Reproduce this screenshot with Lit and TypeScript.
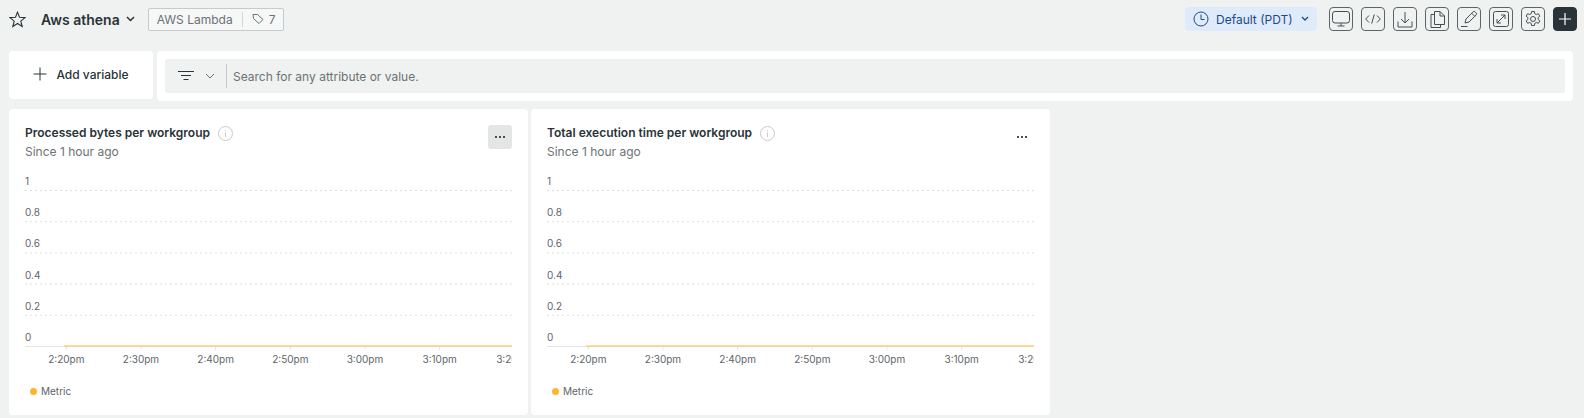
import { LitElement, css, html, svg } from 'lit';
import { customElement, property } from 'lit/decorators.js';

const Y_LABELS = ['1', '0.8', '0.6', '0.4', '0.2', '0'];
const X_LABELS = ['2:20pm', '2:30pm', '2:40pm', '2:50pm', '3:00pm', '3:10pm', '3:20pm'];

@customElement('chart-card')
export class ChartCard extends LitElement {
  @property({ type: String }) heading = '';
  @property({ type: Boolean }) active = false;

  static styles = css`
    :host {
      display: block;
      width: 519px;
      height: 306px;
      background: #fff;
      border-radius: 4px;
      padding: 16px 16px 0 16px;
      box-sizing: border-box;
    }
    .head {
      display: flex;
      justify-content: space-between;
      align-items: flex-start;
      height: 48px;
    }
    .title {
      display: flex;
      align-items: center;
      gap: 8px;
      font-size: 12px;
      font-weight: 600;
      line-height: 16px;
      color: #293338;
    }
    .sub {
      font-size: 12px;
      line-height: 16px;
      margin-top: 3px;
      color: #6b7275;
    }
    .more {
      width: 24px;
      height: 24px;
      border-radius: 3px;
      display: flex;
      align-items: center;
      justify-content: center;
      gap: 2px;
    }
    .more.active {
      background: #e4e6e6;
    }
    .more i {
      width: 2px;
      height: 2px;
      background: #464e52;
    }
    svg.chart {
      display: block;
      overflow: hidden;
    }
    svg.chart text {
      font-size: 10px;
      fill: #5d6568;
    }
    .legend {
      display: flex;
      align-items: center;
      gap: 4px;
      margin: 15px 0 0 5px;
      font-size: 10px;
      line-height: 14px;
      color: #5d6568;
    }
    .dot {
      width: 7px;
      height: 7px;
      border-radius: 50%;
      background: #fdb52c;
    }
  `;

  render() {
    return html`
      <div class="head">
        <div>
          <div class="title">
            ${this.heading}
            <svg width="15" height="15" viewBox="0 0 15 15" fill="none" stroke="#c6caca">
              <circle cx="7.5" cy="7.5" r="7"></circle>
              <path d="M7.5 6.5v4.5M7.5 4v1"></path>
            </svg>
          </div>
          <div class="sub">Since 1 hour ago</div>
        </div>
        <div class="more ${this.active ? 'active' : ''}"><i></i><i></i><i></i></div>
      </div>
      <svg class="chart" width="487" height="196" viewBox="0 0 487 196">
        ${Y_LABELS.map((label, i) => {
          const y = 17 + i * 31.2;
          return svg`
            <text x="0" y=${y - 5}>${label}</text>
            ${i < 5
              ? svg`<line x1="0" x2="487" y1=${y + 0.5} y2=${y + 0.5} stroke="#dcdfdf" stroke-dasharray="2 3"></line>`
              : svg`<line x1="0" x2="487" y1=${y + 0.5} y2=${y + 0.5} stroke="#e3e5e5"></line>`}
          `;
        })}
        <line x1="39" x2="487" y1="173" y2="173" stroke="#f6d27c" stroke-width="1.6"></line>
        ${X_LABELS.map((label, i) => {
          const x = 41.3 + i * 74.67;
          return svg`
            <line x1=${x} x2=${x} y1="174" y2="177" stroke="#e3e5e5"></line>
            <text x=${x} y="190" text-anchor="middle">${label}</text>
          `;
        })}
      </svg>
      <div class="legend"><span class="dot"></span>Metric</div>
    `;
  }
}

@customElement('app-root')
export class AppRoot extends LitElement {
  static styles = css`
    :host {
      display: block;
      width: 1584px;
      height: 418px;
      overflow: hidden;
      background: #f0f2f1;
      font-family: Inter, 'Liberation Sans', sans-serif;
      color: #293338;
    }
    .top {
      display: flex;
      align-items: center;
      height: 51px;
      padding: 0 7px 13px 9px;
      box-sizing: border-box;
    }
    .star {
      margin-right: 15px;
    }
    .name {
      font-size: 14px;
      font-weight: 600;
      margin-right: 6px;
    }
    .caret {
      margin-right: 13px;
    }
    .tag {
      display: flex;
      align-items: center;
      height: 23px;
      box-sizing: border-box;
      border: 1px solid #c6caca;
      border-radius: 2px;
      padding: 0 8px;
      font-size: 12px;
      color: #6b7275;
      background: #f6f7f7;
    }
    .tag .sep {
      width: 1px;
      height: 15px;
      background: #d3d6d6;
      margin: 0 9px;
    }
    .tag svg {
      margin-right: 5px;
    }
    .spacer {
      flex: 1;
    }
    .time {
      display: flex;
      align-items: center;
      height: 24px;
      width: 132px;
      box-sizing: border-box;
      padding: 0 8px;
      background: #dfeafb;
      border-radius: 4px;
      font-size: 12px;
      color: #1d4a87;
      margin-right: 12px;
    }
    .time svg:first-child {
      margin-right: 7px;
    }
    .time svg:last-child {
      margin-left: 8px;
    }
    .icons {
      display: flex;
      gap: 8px;
    }
    .btn {
      width: 24px;
      height: 24px;
      box-sizing: border-box;
      border: 1px solid #5d6568;
      border-radius: 4px;
      display: flex;
      align-items: center;
      justify-content: center;
    }
    .btn.dark {
      background: #293338;
      border-color: #293338;
    }
    .filters {
      display: flex;
      align-items: flex-start;
      gap: 4px;
      padding: 0 11px 0 9px;
    }
    .add {
      width: 144px;
      height: 48px;
      padding-bottom: 2px;
      box-sizing: border-box;
      flex: none;
      background: #fff;
      border-radius: 4px;
      display: flex;
      align-items: center;
      justify-content: center;
      gap: 9px;
      font-size: 12px;
      font-weight: 500;
    }
    .bar {
      flex: 1;
      height: 50px;
      background: #fff;
      border-radius: 4px;
      padding: 8px;
      box-sizing: border-box;
    }
    .search {
      height: 34px;
      background: #f0f2f1;
      border-radius: 2px;
      display: flex;
      align-items: center;
      font-size: 12px;
      color: #6b7275;
    }
    .search .lines {
      margin-left: 13px;
      margin-right: 11px;
    }
    .search .sep {
      width: 1px;
      height: 24px;
      background: #c6caca;
      margin: 0 6px 0 11px;
    }
    .cards {
      display: flex;
      gap: 3px;
      padding: 8px 0 0 9px;
    }
  `;

  render() {
    return html`
      <div class="top">
        <svg class="star" width="17" height="17" viewBox="0 0 17 17" fill="none" stroke="#293338" stroke-width="1.1">
          <path d="M8.5 1.2l2 5 5.6.4-4.3 3.5 1.4 5.4-4.7-3-4.7 3 1.4-5.4-4.3-3.5 5.6-.4z"></path>
        </svg>
        <span class="name">Aws athena</span>
        <svg class="caret" width="9" height="6" viewBox="0 0 9 6" fill="none" stroke="#293338" stroke-width="1.5">
          <path d="M1 1l3.5 3.5L8 1"></path>
        </svg>
        <div class="tag">
          AWS Lambda<span class="sep"></span>
          <svg width="12" height="12" viewBox="0 0 12 12" fill="none" stroke="#6b7275">
            <path d="M1 1.5h4.5L11 6.5 7 10.5 1.5 5.5z"></path>
          </svg>
          7
        </div>
        <span class="spacer"></span>
        <div class="time">
          <svg width="16" height="16" viewBox="0 0 16 16" fill="none" stroke="#1d4a87">
            <circle cx="8" cy="8" r="7"></circle>
            <path d="M8 3.5V8.5h3.5"></path>
          </svg>
          Default (PDT)
          <svg width="8" height="6" viewBox="0 0 8 6" fill="none" stroke="#1d4a87" stroke-width="1.3">
            <path d="M1 1l3 3 3-3"></path>
          </svg>
        </div>
        <div class="icons">
          <div class="btn">
            <svg width="22" height="22" viewBox="0 0 22 22" fill="none" stroke="#464e52">
              <rect x="2.5" y="3.5" width="17" height="11.5" rx="2.5"></rect>
              <path d="M11 15v3M7.5 18h7"></path>
            </svg>
          </div>
          <div class="btn">
            <svg width="22" height="22" viewBox="0 0 22 22" fill="none" stroke="#464e52">
              <path d="M7 7.5L3.7 11 7 14.5M15 7.5l3.3 3.5-3.3 3.5M12.3 6.5l-2.6 9"></path>
            </svg>
          </div>
          <div class="btn">
            <svg width="22" height="22" viewBox="0 0 22 22" fill="none" stroke="#464e52">
              <path d="M11 4v11M7 11l4 4 4-4M4 13.5v5.5h14v-5.5"></path>
            </svg>
          </div>
          <div class="btn">
            <svg width="22" height="22" viewBox="0 0 22 22" fill="none" stroke="#464e52">
              <path d="M8.5 3.5h5.5l4.5 4.5v8.5h-10zM14 3.5V8h4.5M8.5 6.5H5v13h9.5v-3"></path>
            </svg>
          </div>
          <div class="btn">
            <svg width="22" height="22" viewBox="0 0 22 22" fill="none" stroke="#464e52">
              <path d="M7 15l1-4 7.2-7.3a1.2 1.2 0 0 1 1.7 0l1.4 1.4a1.2 1.2 0 0 1 0 1.7L11 14zM13.7 5.2l3.1 3.1M3 18.5h6.5"></path>
            </svg>
          </div>
          <div class="btn">
            <svg width="22" height="22" viewBox="0 0 22 22" fill="none" stroke="#464e52">
              <rect x="3.5" y="3.5" width="15" height="15" rx="2"></rect>
              <path d="M7 15l8-8M11 7h4v4M7 11v4h4"></path>
            </svg>
          </div>
          <div class="btn">
            <svg width="18" height="18" viewBox="0 0 18 18" fill="none" stroke="#464e52">
              <circle cx="9" cy="9" r="2.5"></circle>
              <path d="M7.6 1.5h2.8l.4 2.2 1.5.8 2.1-.8 1.4 2.5-1.7 1.4v1.8l1.7 1.4-1.4 2.5-2.1-.8-1.5.8-.4 2.2H7.6l-.4-2.2-1.5-.8-2.1.8-1.4-2.5 1.7-1.4V7.6L2.2 6.2l1.4-2.5 2.1.8 1.5-.8z"></path>
            </svg>
          </div>
          <div class="btn dark">
            <svg width="12" height="12" viewBox="0 0 12 12" fill="none" stroke="#fff" stroke-width="1.2">
              <path d="M6 0v12M0 6h12"></path>
            </svg>
          </div>
        </div>
      </div>
      <div class="filters">
        <div class="add">
          <svg width="14" height="14" viewBox="0 0 14 14" fill="none" stroke="#293338">
            <path d="M7 .5v13M.5 7h13"></path>
          </svg>
          Add variable
        </div>
        <div class="bar">
          <div class="search">
            <svg class="lines" width="16" height="12" viewBox="0 0 16 12" fill="none" stroke="#293338">
              <path d="M0 1.5h16M3 5.5h10M5.5 9.5h5"></path>
            </svg>
            <svg width="10" height="6" viewBox="0 0 10 6" fill="none" stroke="#6b7275">
              <path d="M1 1l4 4 4-4"></path>
            </svg>
            <span class="sep"></span>
            Search for any attribute or value.
          </div>
        </div>
      </div>
      <div class="cards">
        <chart-card heading="Processed bytes per workgroup" active></chart-card>
        <chart-card heading="Total execution time per workgroup"></chart-card>
      </div>
    `;
  }
}
